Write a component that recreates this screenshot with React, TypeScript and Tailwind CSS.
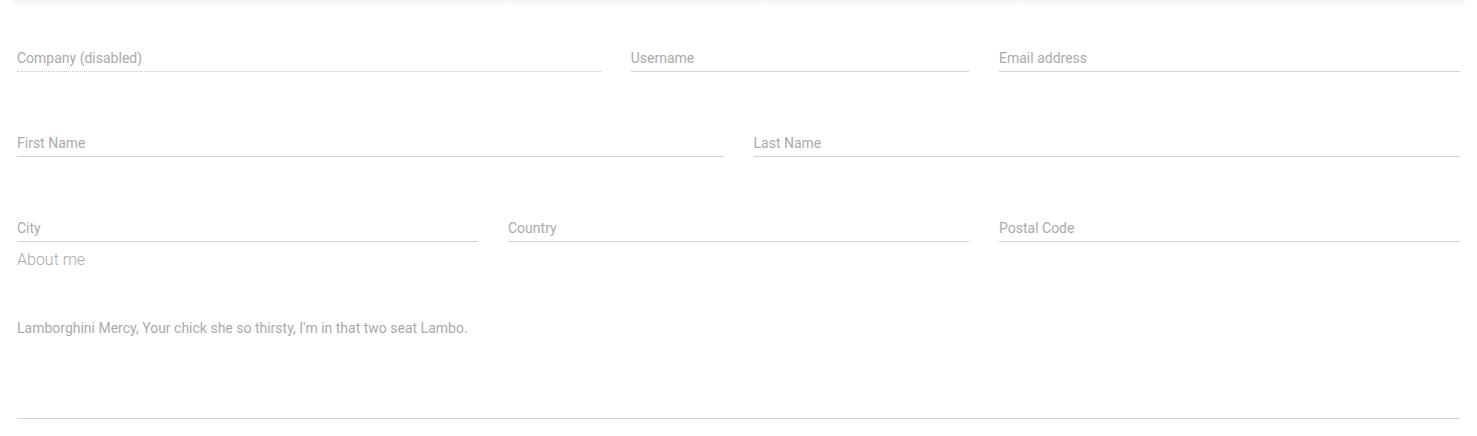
const Field = ({ label, span, disabled }: { label: string; span: string; disabled?: boolean }) => {
  return (
    <div
      className={`${span} pb-[3px] border-b ${
        disabled ? "border-dotted border-[#c8c8c8]" : "border-[#d2d2d2]"
      }`}
    >
      <div className="text-[14px] leading-5 text-[#aaaaaa]">{label}</div>
    </div>
  );
};

export default function App() {
  return (
    <div
      className="relative w-[1477px] h-[436px] bg-white overflow-hidden"
      style={{ fontFamily: "Roboto, 'Helvetica Neue', Arial, sans-serif" }}
    >
      <div className="mx-[12px] h-[6px] bg-gradient-to-b from-[#f3f3f3] to-white" />
      <div className="px-[17px]">
        <div className="grid grid-cols-12 gap-x-[30px] mt-[42px]">
          <Field label="Company (disabled)" span="col-span-5" disabled />
          <Field label="Username" span="col-span-3" />
          <Field label="Email address" span="col-span-4" />
        </div>
        <div className="grid grid-cols-12 gap-x-[30px] mt-[61px]">
          <Field label="First Name" span="col-span-6" />
          <Field label="Last Name" span="col-span-6" />
        </div>
        <div className="grid grid-cols-12 gap-x-[30px] mt-[61px]">
          <Field label="City" span="col-span-4" />
          <Field label="Country" span="col-span-4" />
          <Field label="Postal Code" span="col-span-4" />
        </div>
        <div className="mt-[8px] text-[16px] font-light leading-5 text-[#aaaaaa]">About me</div>
        <div className="mt-[48px] pb-[80px] border-b border-[#d2d2d2]">
          <div className="text-[14px] leading-5 text-[#aaaaaa]">
            Lamborghini Mercy, Your chick she so thirsty, I'm in that two seat Lambo.
          </div>
        </div>
      </div>
    </div>
  );
}
